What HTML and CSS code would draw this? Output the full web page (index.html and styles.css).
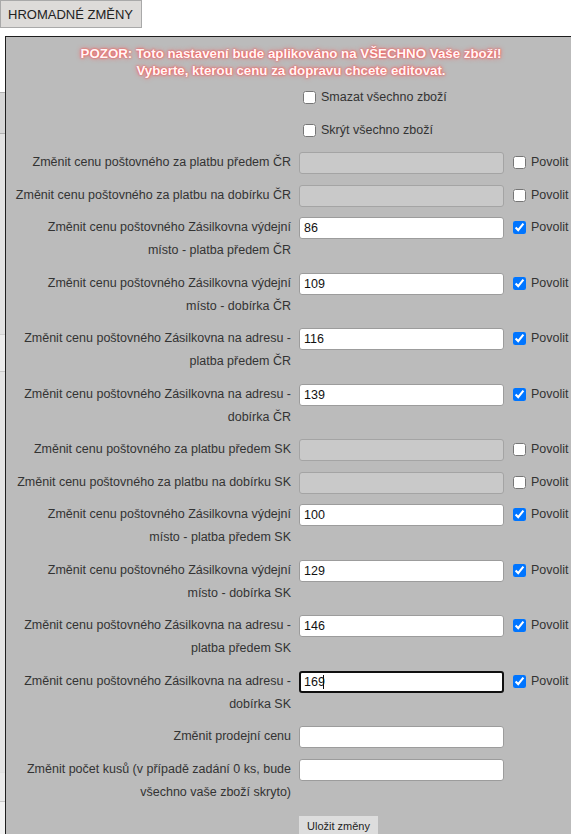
FILE: index.html
```html
<!DOCTYPE html>
<html lang="cs">
<head>
<meta charset="utf-8">
<title>Hromadné změny</title>
<link rel="stylesheet" href="styles.css">
</head>
<body>
<button class="bulk-btn" type="button">HROMADNÉ ZMĚNY</button>
<div class="bg-list">
  <div class="bg-row bg-a"></div>
  <div class="bg-row bg-b"></div>
  <div class="bg-row bg-c"></div>
  <div class="bg-row bg-d"></div>
  <div class="bg-row bg-e"></div>
  <div class="bg-row bg-f"></div>
</div>

<div class="modal">
  <p class="warning">POZOR: Toto nastavení bude aplikováno na VŠECHNO Vaše zboží!<br>Vyberte, kterou cenu za dopravu chcete editovat.</p>
  <form class="bulk-form">
    <div class="row">
      <span class="lbl"></span>
      <label class="opt"><input type="checkbox" class="opt-box">Smazat všechno zboží</label>
    </div>
    <div class="row">
      <span class="lbl"></span>
      <label class="opt"><input type="checkbox" class="opt-box">Skrýt všechno zboží</label>
    </div>

    <div class="row">
      <span class="lbl">Změnit cenu poštovného za platbu předem ČR</span>
      <input class="field" type="text" disabled>
      <label class="allow"><input type="checkbox" class="allow-box">Povolit</label>
    </div>
    <div class="row">
      <span class="lbl">Změnit cenu poštovného za platbu na dobírku ČR</span>
      <input class="field" type="text" disabled>
      <label class="allow"><input type="checkbox" class="allow-box">Povolit</label>
    </div>
    <div class="row">
      <span class="lbl">Změnit cenu poštovného Zásilkovna výdejní místo - platba předem ČR</span>
      <input class="field" type="text" value="86">
      <label class="allow"><input type="checkbox" class="allow-box" checked>Povolit</label>
    </div>
    <div class="row">
      <span class="lbl">Změnit cenu poštovného Zásilkovna výdejní místo - dobírka ČR</span>
      <input class="field" type="text" value="109">
      <label class="allow"><input type="checkbox" class="allow-box" checked>Povolit</label>
    </div>
    <div class="row">
      <span class="lbl">Změnit cenu poštovného Zásilkovna na adresu - platba předem ČR</span>
      <input class="field" type="text" value="116">
      <label class="allow"><input type="checkbox" class="allow-box" checked>Povolit</label>
    </div>
    <div class="row">
      <span class="lbl">Změnit cenu poštovného Zásilkovna na adresu - dobírka ČR</span>
      <input class="field" type="text" value="139">
      <label class="allow"><input type="checkbox" class="allow-box" checked>Povolit</label>
    </div>

    <div class="row">
      <span class="lbl">Změnit cenu poštovného za platbu předem SK</span>
      <input class="field" type="text" disabled>
      <label class="allow"><input type="checkbox" class="allow-box">Povolit</label>
    </div>
    <div class="row">
      <span class="lbl">Změnit cenu poštovného za platbu na dobírku SK</span>
      <input class="field" type="text" disabled>
      <label class="allow"><input type="checkbox" class="allow-box">Povolit</label>
    </div>
    <div class="row">
      <span class="lbl">Změnit cenu poštovného Zásilkovna výdejní místo - platba předem SK</span>
      <input class="field" type="text" value="100">
      <label class="allow"><input type="checkbox" class="allow-box" checked>Povolit</label>
    </div>
    <div class="row">
      <span class="lbl">Změnit cenu poštovného Zásilkovna výdejní místo - dobírka SK</span>
      <input class="field" type="text" value="129">
      <label class="allow"><input type="checkbox" class="allow-box" checked>Povolit</label>
    </div>
    <div class="row">
      <span class="lbl">Změnit cenu poštovného Zásilkovna na adresu - platba předem SK</span>
      <input class="field" type="text" value="146">
      <label class="allow"><input type="checkbox" class="allow-box" checked>Povolit</label>
    </div>
    <div class="row">
      <span class="lbl">Změnit cenu poštovného Zásilkovna na adresu - dobírka SK</span>
      <span class="field-wrap">
        <input class="field focused" type="text" value="169">
        <span class="caret"></span>
      </span>
      <label class="allow"><input type="checkbox" class="allow-box" checked>Povolit</label>
    </div>

    <div class="row">
      <span class="lbl">Změnit prodejní cenu</span>
      <input class="field" type="text">
    </div>
    <div class="row">
      <span class="lbl">Změnit počet kusů (v případě zadání 0 ks, bude všechno vaše zboží skryto)</span>
      <input class="field" type="text">
    </div>

    <div class="row submit-row">
      <span class="lbl"></span>
      <div><button class="save-btn" type="button">Uložit změny</button></div>
    </div>
  </form>
</div>
</body>
</html>
```

FILE: styles.css
```css
html, body {
  margin: 0;
  padding: 0;
  background: #ffffff;
  overflow: hidden;
  height: 834px;
}

body {
  position: relative;
  font-family: "Liberation Sans", Arial, sans-serif;
  font-size: 12.5px;
  color: #333333;
}

.bulk-btn {
  display: block;
  margin: 0;
  width: 142px;
  height: 28px;
  padding: 0 7px;
  font-family: "Liberation Sans", Arial, sans-serif;
  font-size: 13px;
  color: #222222;
  background: #dddbd9;
  border: 1px solid #a9a9a9;
  text-align: left;
}

/* background page peeking out at the left edge */
.bg-list {
  margin-top: 64px;
  display: flex;
  flex-direction: column;
}
.bg-row {
  border-top: 1px solid #b0b0b0;
  background: #dcdcdc;
}
.bg-a { height: 40px; background: #d6d6d6; }
.bg-b { height: 200px; background: #e2e2e2; }
.bg-c { height: 36px; background: #ececec; border-top-color: #d0d0d0; }
.bg-d { height: 400px; background: #e4e4e4; border-top-color: #c8c8c8; }
.bg-e { height: 28px; background: #eaeaea; border-top-color: #e0e0e0; }
.bg-f { height: 60px; background: #f2f2f2; border-top-color: #c8c8c8; }

.modal {
  position: absolute;
  left: 5px;
  top: 36px;
  width: 570px;
  height: 820px;
  background: #bbbbbb;
  border-top: 1px solid #1e1e1e;
  border-left: 1px solid #1e1e1e;
}

.warning {
  margin: 0;
  padding-top: 8px;
  text-align: center;
  font-family: "Liberation Sans", Arial, sans-serif;
  font-weight: bold;
  font-size: 13.3px;
  line-height: 17px;
  color: #fff6f6;
  text-shadow: 0 0 2px #ff3a3a, 0 0 5px #ff6060;
}

.bulk-form {
  margin-top: 2px;
  display: flex;
  flex-direction: column;
}

.row {
  display: grid;
  grid-template-columns: 276px 205px auto;
  column-gap: 8px;
  padding: 5px 0 4.5px 9px;
  line-height: 23px;
  align-items: start;
}

.lbl {
  text-align: right;
}

.field {
  box-sizing: border-box;
  width: 205px;
  height: 22px;
  margin: 1px 0 0 0;
  padding: 0 4px;
  font-family: "Liberation Sans", Arial, sans-serif;
  font-size: 12.5px;
  color: #111111;
  background: #ffffff;
  border: 1px solid #9c9c9c;
  border-radius: 3px;
}
.field:disabled {
  background: #c9c9c9;
  border-color: #a4a4a4;
}

.field-wrap {
  position: relative;
  display: block;
  height: 23px;
}
.field.focused {
  border: 2px solid #101010;
  padding: 0 3px;
}
.caret {
  position: absolute;
  left: 24px;
  top: 5px;
  width: 1px;
  height: 14px;
  background: #111111;
}

.opt, .allow {
  display: flex;
  align-items: center;
  height: 23px;
  white-space: nowrap;
}

.opt-box {
  margin: 0 5px 0 4px;
  width: 13px;
  height: 13px;
}
.allow-box {
  margin: 0 5px 0 1px;
  width: 13px;
  height: 13px;
}

.submit-row {
  padding-top: 7px;
}
.save-btn {
  margin: 0;
  padding: 2px 8px;
  font-family: "Liberation Sans", Arial, sans-serif;
  font-size: 11px;
  line-height: 16px;
  color: #222222;
  background: #dddddd;
  border: none;
  border-radius: 0;
}
```
